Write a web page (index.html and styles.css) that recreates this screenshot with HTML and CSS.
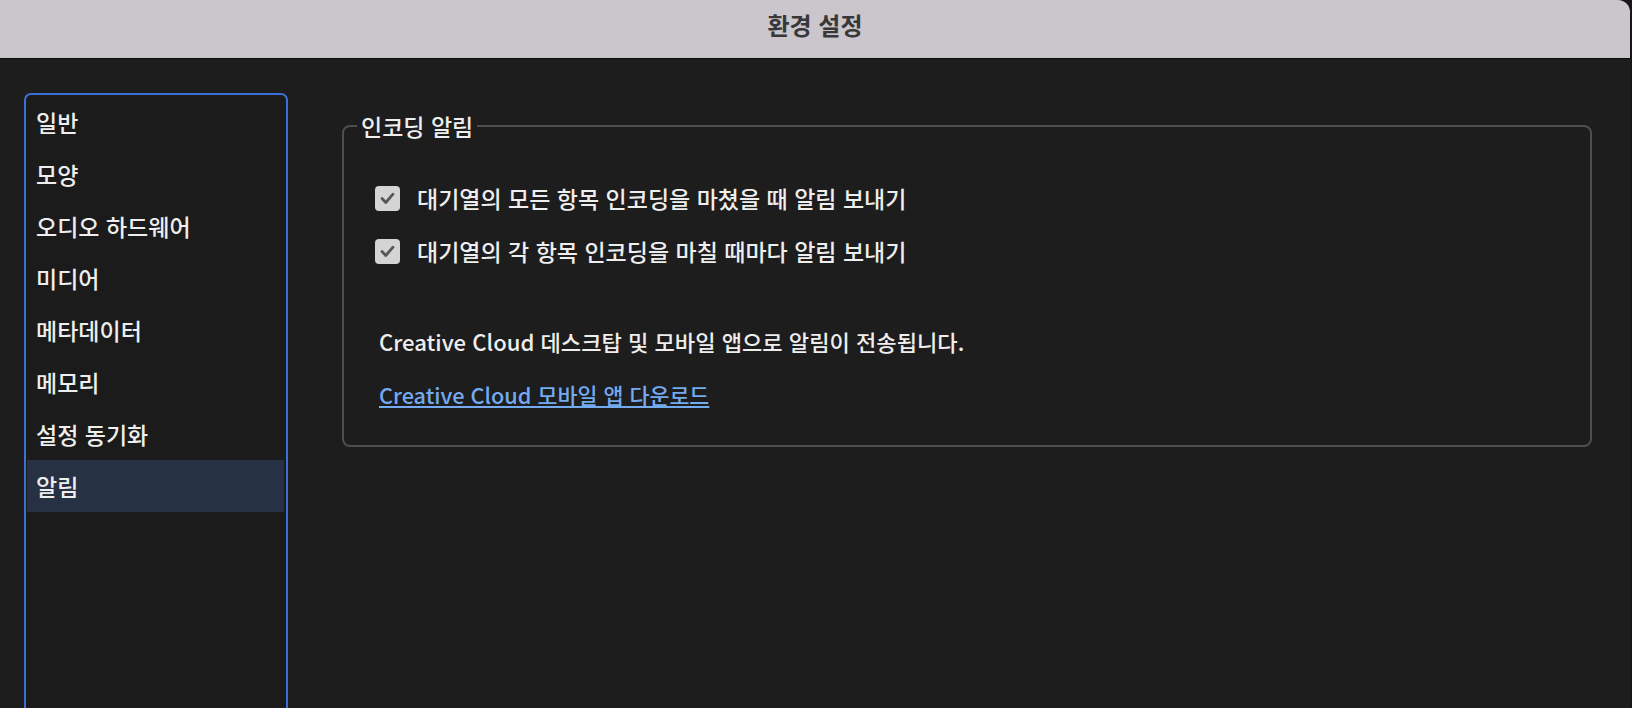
FILE: index.html
```html
<!DOCTYPE html>
<html lang="ko">
<head>
    <meta charset="UTF-8">
    <meta name="viewport" content="width=device-width, initial-scale=1.0">
    <title>환경 설정</title>
    <link rel="stylesheet" href="styles.css">
</head>
<body>
    <div class="window">
        <div class="titlebar">환경 설정</div>

        <div class="main">
            <ul class="sidebar">
                <li class="nav-item">일반</li>
                <li class="nav-item">모양</li>
                <li class="nav-item">오디오 하드웨어</li>
                <li class="nav-item">미디어</li>
                <li class="nav-item">메타데이터</li>
                <li class="nav-item">메모리</li>
                <li class="nav-item">설정 동기화</li>
                <li class="nav-item selected">알림</li>
            </ul>

            <div class="panel">
                <fieldset class="group">
                    <legend>인코딩 알림</legend>

                    <div class="options">
                        <label class="check-row">
                            <span class="checkbox">
                                <svg width="25" height="25" viewBox="0 0 25 25"><path d="M7 12.5 L10.8 16.5 L18 8.2" fill="none" stroke="#575757" stroke-width="2.8" stroke-linecap="round" stroke-linejoin="round"/></svg>
                            </span>
                            대기열의 모든 항목 인코딩을 마쳤을 때 알림 보내기
                        </label>
                        <label class="check-row">
                            <span class="checkbox">
                                <svg width="25" height="25" viewBox="0 0 25 25"><path d="M7 12.5 L10.8 16.5 L18 8.2" fill="none" stroke="#575757" stroke-width="2.8" stroke-linecap="round" stroke-linejoin="round"/></svg>
                            </span>
                            대기열의 각 항목 인코딩을 마칠 때마다 알림 보내기
                        </label>
                    </div>

                    <p class="note">Creative Cloud 데스크탑 및 모바일 앱으로 알림이 전송됩니다.</p>
                    <a class="link" href="#">Creative Cloud 모바일 앱 다운로드</a>
                </fieldset>
            </div>
        </div>
    </div>
</body>
</html>
```

FILE: styles.css
```css
html, body {
    margin: 0;
    padding: 0;
    height: 100%;
}
body {
    background-color: #161616;
    font-family: "Noto Sans CJK KR", "Noto Sans", sans-serif;
    color: #eeeeee;
    overflow: hidden;
}
.window {
    width: 1630px;
    height: 708px;
    display: flex;
    flex-direction: column;
    background-color: #1d1d1d;
    border-top-right-radius: 12px;
    overflow: hidden;
}
.titlebar {
    height: 59px;
    box-sizing: border-box;
    padding-bottom: 9px;
    display: flex;
    align-items: center;
    justify-content: center;
    background-color: #cbc6cc;
    border-bottom: 1px solid #0d0d0d;
    color: #383838;
    font-size: 24px;
    font-weight: bold;
    flex-shrink: 0;
}
.main {
    flex: 1;
    display: flex;
    align-items: flex-start;
    gap: 54px;
    padding: 34px 38px 0 24px;
    overflow: hidden;
}
.sidebar {
    list-style: none;
    margin: 0;
    padding: 1px 2px 0 1px;
    box-sizing: border-box;
    width: 264px;
    height: 640px;
    flex-shrink: 0;
    border: 2px solid #3d6fd8;
    border-radius: 7px;
    background-color: #1b1b1b;
}
.nav-item {
    height: 52px;
    line-height: 52px;
    padding-left: 9px;
    font-size: 23px;
    font-weight: 500;
}
.nav-item.selected {
    background-color: #263144;
}
.panel {
    flex: 1;
    margin-top: 17px;
}
.group {
    margin: 0;
    padding: 0 0 32px 13px;
    border: 2px solid #4e4e4e;
    border-radius: 8px;
}
.group legend {
    padding: 0 4px;
    font-size: 23px;
    font-weight: 500;
    line-height: 32px;
}
.options {
    display: flex;
    flex-direction: column;
    gap: 17px;
    margin-top: 38px;
    padding-left: 18px;
}
.check-row {
    display: flex;
    align-items: center;
    gap: 17px;
    height: 36px;
    font-size: 23px;
    font-weight: 500;
}
.checkbox {
    width: 25px;
    height: 25px;
    border-radius: 4px;
    background-color: #d4d4d4;
    display: flex;
}
.note {
    margin: 54px 0 0 22px;
    font-size: 22.1px;
    font-weight: 500;
    line-height: 36px;
}
.link {
    display: inline-block;
    margin: 18px 0 0 22px;
    font-size: 21.7px;
    font-weight: 500;
    line-height: 36px;
    color: #74aaf0;
    text-decoration: underline;
}
```
